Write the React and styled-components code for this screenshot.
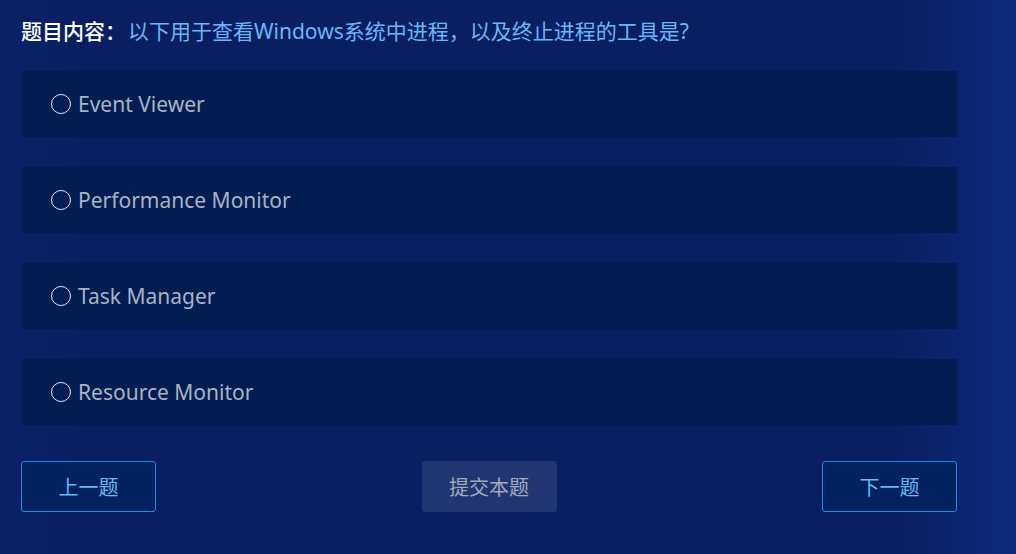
import React, { useState } from 'react';
import styled, { createGlobalStyle } from 'styled-components';

const GlobalStyle = createGlobalStyle`
  html, body {
    margin: 0;
    padding: 0;
  }
  body {
    font-family: "Noto Sans", "Noto Sans CJK SC", sans-serif;
    background: #0a2064;
  }
`;

// Styled Components
const Page = styled.div`
  width: 1016px;
  height: 554px;
  box-sizing: border-box;
  padding: 16px 59px 0 21px;
  background: linear-gradient(90deg, #0b2268 0%, #0a1f62 8%, #0a1f62 88%, #0b2b7a 100%);
`;

const Title = styled.div`
  font-size: 21px;
  line-height: 30px;
  color: #6ab6f6;
  margin-bottom: 25px;
`;

const Label = styled.span`
  color: #ffffff;
  font-weight: 500;
  margin-right: 2px;
`;

const Options = styled.div`
  display: flex;
  flex-direction: column;
  gap: 30px;
`;

const Option = styled.div`
  height: 66px;
  display: flex;
  align-items: center;
  gap: 7px;
  padding-left: 30px;
  background: #021d52;
  color: #aab2c2;
  font-size: 21px;
  cursor: pointer;
`;

const Radio = styled.span`
  width: 20px;
  height: 20px;
  border: 1.5px solid #dfe6f2;
  border-radius: 50%;
  box-sizing: border-box;
  flex-shrink: 0;
  background: ${(p) => (p.$checked ? '#6ab6f6' : 'transparent')};
`;

const Footer = styled.div`
  margin-top: 36px;
  display: flex;
  justify-content: space-between;
  align-items: center;
`;

const Button = styled.button`
  width: 135px;
  height: 51px;
  border-radius: 3px;
  font-family: "Noto Sans CJK SC", sans-serif;
  font-size: 20px;
  cursor: pointer;
  border: ${(p) => (p.$muted ? 'none' : '1px solid #1a8ee8')};
  background: ${(p) => (p.$muted ? '#213572' : '#02215f')};
  color: ${(p) => (p.$muted ? '#a3aabb' : '#6cb6f2')};
`;

const options = ['Event Viewer', 'Performance Monitor', 'Task Manager', 'Resource Monitor'];

const App = () => {
  const [picked, setPicked] = useState(null);

  return (
    <>
      <GlobalStyle />
      <Page>
        <Title>
          <Label>题目内容：</Label>
          以下用于查看Windows系统中进程，以及终止进程的工具是?
        </Title>
        <Options>
          {options.map((text, i) => (
            <Option key={text} onClick={() => setPicked(i)}>
              <Radio $checked={picked === i} />
              {text}
            </Option>
          ))}
        </Options>
        <Footer>
          <Button>上一题</Button>
          <Button $muted>提交本题</Button>
          <Button>下一题</Button>
        </Footer>
      </Page>
    </>
  );
};

export default App;
